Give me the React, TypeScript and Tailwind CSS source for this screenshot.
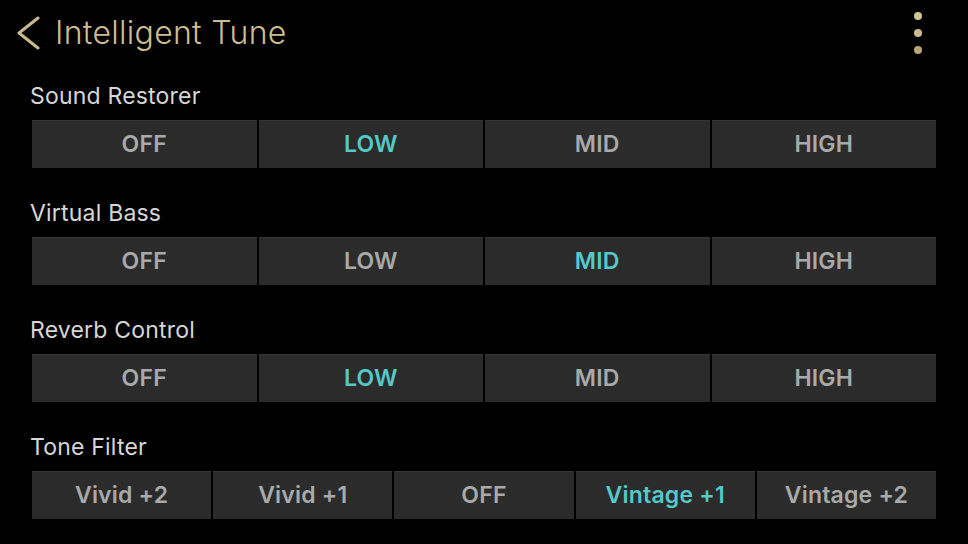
import React from "react";

type Section = { label: string; options: string[]; active: number };

const sections: Section[] = [
  { label: "Sound Restorer", options: ["OFF", "LOW", "MID", "HIGH"], active: 1 },
  { label: "Virtual Bass", options: ["OFF", "LOW", "MID", "HIGH"], active: 2 },
  { label: "Reverb Control", options: ["OFF", "LOW", "MID", "HIGH"], active: 1 },
  { label: "Tone Filter", options: ["Vivid +2", "Vivid +1", "OFF", "Vintage +1", "Vintage +2"], active: 3 },
];

const Segmented = ({ s }: { s: Section }) => {
  return (
    <div className="mt-[10px] flex gap-[2px] h-[48px]">
      {s.options.map((o, i) => (
        <div
          key={o}
          className={`flex-1 flex items-center justify-center bg-[#2b2b2b] border-t border-[#363636] text-[23px] font-semibold tracking-[0.2px] ${
            i === s.active ? "text-[#55c8c8]" : "text-[#a9a9a9]"
          }`}
        >
          {o}
        </div>
      ))}
    </div>
  );
};

export default function App() {
  return (
    <div className="w-[968px] h-[544px] bg-black overflow-hidden" style={{ fontFamily: "Inter, 'Open Sans', sans-serif" }}>
      <div className="flex items-center justify-between h-[66px] pl-[15px] pr-[46px]">
        <div className="flex items-center gap-[14px]">
          <svg width="26" height="34" viewBox="0 0 26 34" fill="none">
            <path d="M23 2 L4 17 L23 32" stroke="#c9b88c" strokeWidth="3" strokeLinecap="round" strokeLinejoin="round" />
          </svg>
          <span className="text-[32px] font-light text-[#cdbd92] tracking-[0.3px]">Intelligent Tune</span>
        </div>
        <div className="flex flex-col gap-[9px]">
          <span className="block w-[8px] h-[8px] rounded-full bg-[#d4c39a]" />
          <span className="block w-[8px] h-[8px] rounded-full bg-[#cdbb8f]" />
          <span className="block w-[8px] h-[8px] rounded-full bg-[#b9a676]" />
        </div>
      </div>
      <div className="px-[32px] pt-[16px] flex flex-col gap-[31px]">
        {sections.map((s) => (
          <div key={s.label}>
            <div className="text-[23px] leading-[28px] text-[#d6d6d6] ml-[-2px] tracking-[0.2px]">{s.label}</div>
            <Segmented s={s} />
          </div>
        ))}
      </div>
    </div>
  );
}
